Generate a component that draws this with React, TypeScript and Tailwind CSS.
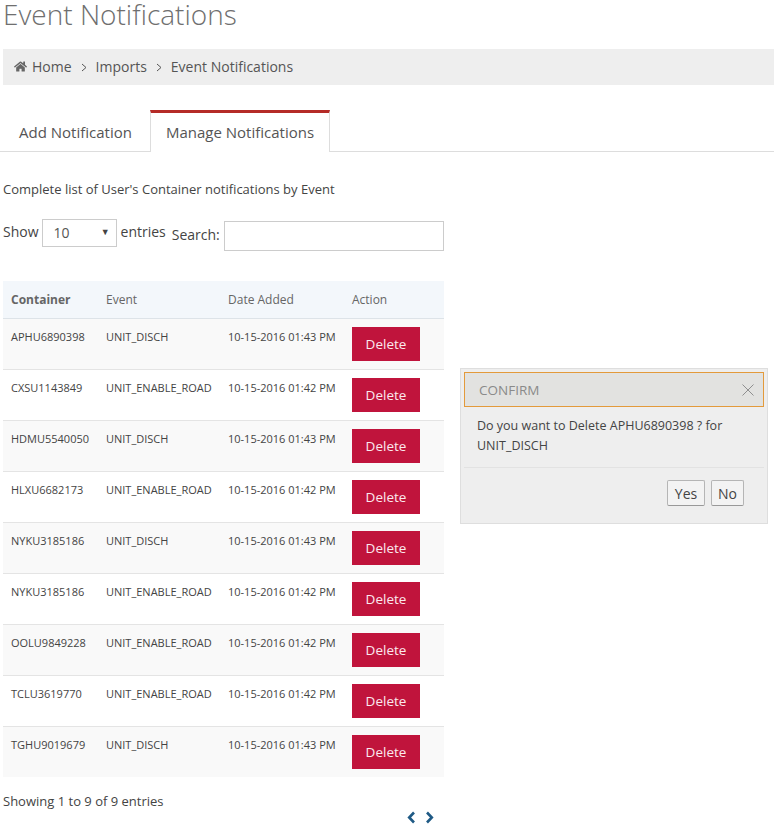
import { FaHome } from 'react-icons/fa';

const rows = [
  { container: 'APHU6890398', event: 'UNIT_DISCH', date: '10-15-2016 01:43 PM' },
  { container: 'CXSU1143849', event: 'UNIT_ENABLE_ROAD', date: '10-15-2016 01:42 PM' },
  { container: 'HDMU5540050', event: 'UNIT_DISCH', date: '10-15-2016 01:43 PM' },
  { container: 'HLXU6682173', event: 'UNIT_ENABLE_ROAD', date: '10-15-2016 01:42 PM' },
  { container: 'NYKU3185186', event: 'UNIT_DISCH', date: '10-15-2016 01:43 PM' },
  { container: 'NYKU3185186', event: 'UNIT_ENABLE_ROAD', date: '10-15-2016 01:42 PM' },
  { container: 'OOLU9849228', event: 'UNIT_ENABLE_ROAD', date: '10-15-2016 01:42 PM' },
  { container: 'TCLU3619770', event: 'UNIT_ENABLE_ROAD', date: '10-15-2016 01:42 PM' },
  { container: 'TGHU9019679', event: 'UNIT_DISCH', date: '10-15-2016 01:43 PM' },
];

function ChevronLeft() {
  return (
    <svg width="9" height="13" viewBox="0 0 9 13" fill="none" stroke="#1f5a85" strokeWidth="2.6">
      <path d="M7 1.5 L2.2 6.5 L7 11.5" />
    </svg>
  );
}

function ChevronRight() {
  return (
    <svg width="9" height="13" viewBox="0 0 9 13" fill="none" stroke="#1f5a85" strokeWidth="2.6">
      <path d="M2 1.5 L6.8 6.5 L2 11.5" />
    </svg>
  );
}

function Crumb() {
  return (
    <svg width="6" height="9" viewBox="0 0 6 9" fill="none" stroke="#555" strokeWidth="1" className="mx-[9px] mt-[1px]">
      <path d="M1 1 L5 4.5 L1 8" />
    </svg>
  );
}

export default function App() {
  return (
    <div className="relative w-[774px] h-[838px] overflow-hidden bg-white font-['Open_Sans',sans-serif] text-[#444]">
      <h1 className="pl-[3px] h-[49px] text-[28px] leading-[28px] font-light text-[#6f6f6f]">Event Notifications</h1>

      <div className="ml-[3px] flex h-[36px] items-center bg-[#eeeeee] pb-[1px] pl-[11px] text-[14px] text-[#555]">
        <FaHome size={13} className="mr-[5px] text-[#666]" />
        <span>Home</span>
        <Crumb />
        <span>Imports</span>
        <Crumb />
        <span>Event Notifications</span>
      </div>

      <div className="mt-[25px] flex h-[42px] items-end border-b border-[#dddddd] pl-[3px] text-[15px] text-[#555]">
        <div className="flex h-[41px] w-[147px] items-center justify-center pr-[2px] pt-[3px]">Add Notification</div>
        <div className="-mb-px flex h-[42px] w-[180px] items-center justify-center border-x border-t-[3px] border-x-[#dddddd] border-t-[#b52b27] bg-white">
          Manage Notifications
        </div>
      </div>

      <p className="mt-[28px] pl-[3px] text-[13px] leading-[18px] text-[#444]">Complete list of User's Container notifications by Event</p>

      <div className="mt-[21px] flex pl-[3px] text-[14px] text-[#444]">
        <span className="mt-[4px] leading-[18px]">Show</span>
        <div className="ml-[3px] flex h-[28px] w-[75px] items-center justify-between border border-[#cccccc] pb-[2px] pl-[11px] pr-[6px]">
          <span className="text-[14px] text-[#555]">10</span>
          <span className="text-[9px] text-[#444]">▼</span>
        </div>
        <span className="ml-[4px] mt-[4px] leading-[18px]">entries</span>
        <span className="ml-[6px] mt-[7px] leading-[18px]">Search:</span>
        <div className="ml-[4px] mt-[2px] h-[30px] w-[220px] border border-[#cccccc] bg-white" />
      </div>

      <table className="mt-[30px] ml-[3px] w-[441px] table-fixed border-collapse text-left text-[11px] text-[#444]">
        <colgroup>
          <col className="w-[95px]" />
          <col className="w-[122px]" />
          <col className="w-[124px]" />
          <col className="w-[100px]" />
        </colgroup>
        <thead>
          <tr className="h-[37px] border-b border-[#dde3e8] bg-[#f3f7fb] text-[12px] text-[#666]">
            <th className="pl-[8px] pt-[2px] font-bold">Container</th>
            <th className="pl-[8px] pt-[2px] font-normal">Event</th>
            <th className="pl-[8px] pt-[2px] font-normal">Date Added</th>
            <th className="pl-[8px] pt-[2px] font-normal">Action</th>
          </tr>
        </thead>
        <tbody>
          {rows.map((row, i) => (
            <tr key={i} className={`h-[51px] border-b border-[#e4e4e4] last:border-b-0 ${i % 2 === 0 ? 'bg-[#f9f9f9]' : 'bg-white'}`}>
              <td className="pl-[8px] pt-[10px] align-top leading-[15px]">{row.container}</td>
              <td className="pl-[8px] pt-[10px] align-top leading-[15px]">{row.event}</td>
              <td className="pl-[8px] pt-[10px] align-top leading-[15px]">{row.date}</td>
              <td className="pl-[8px] pt-[8px] align-top">
                <button className="h-[34px] w-[68px] bg-[#c0143c] pt-[2px] text-[13.5px] font-medium text-[#fbe9ee]">Delete</button>
              </td>
            </tr>
          ))}
        </tbody>
      </table>

      <div className="mt-[15px] pl-[3px] text-[13px] leading-[18px] text-[#444]">Showing 1 to 9 of 9 entries</div>

      <div className="ml-[407px] mt-[1px] flex gap-[9px]">
        <ChevronLeft />
        <ChevronRight />
      </div>

      {/* confirm popup sits over the page */}
      <div className="absolute left-[460px] top-[368px] h-[156px] w-[308px] border border-[#dedede] bg-[#eeeeee] px-[3px] pt-[3px]">
        <div className="flex h-[35px] items-center justify-between border border-[#e39a3b] bg-[#e2e2e0] pl-[14px] pr-[8px]">
          <span className="pt-[1px] text-[13.5px] text-[#8a8a8a]">CONFIRM</span>
          <svg width="14" height="14" viewBox="0 0 14 14" stroke="#8f8f8f" strokeWidth="1" fill="none">
            <path d="M1.5 1.5 L12.5 12.5 M12.5 1.5 L1.5 12.5" />
          </svg>
        </div>
        <p className="h-[61px] border-b border-[#e2e2e2] px-[13px] pt-[9px] text-[12.5px] leading-[20px] text-[#444]">
          Do you want to Delete APHU6890398 ? for UNIT_DISCH
        </p>
        <div className="flex justify-end gap-[6px] pr-[20px] pt-[12px]">
          <button className="h-[26px] w-[38px] rounded-[2px] border border-[#b5b5b5] border-b-[#999] bg-[#f3f3f3] text-[14px] text-[#444]">Yes</button>
          <button className="h-[26px] w-[33px] rounded-[2px] border border-[#b5b5b5] border-b-[#999] bg-[#f3f3f3] text-[14px] text-[#444]">No</button>
        </div>
      </div>
    </div>
  );
}
